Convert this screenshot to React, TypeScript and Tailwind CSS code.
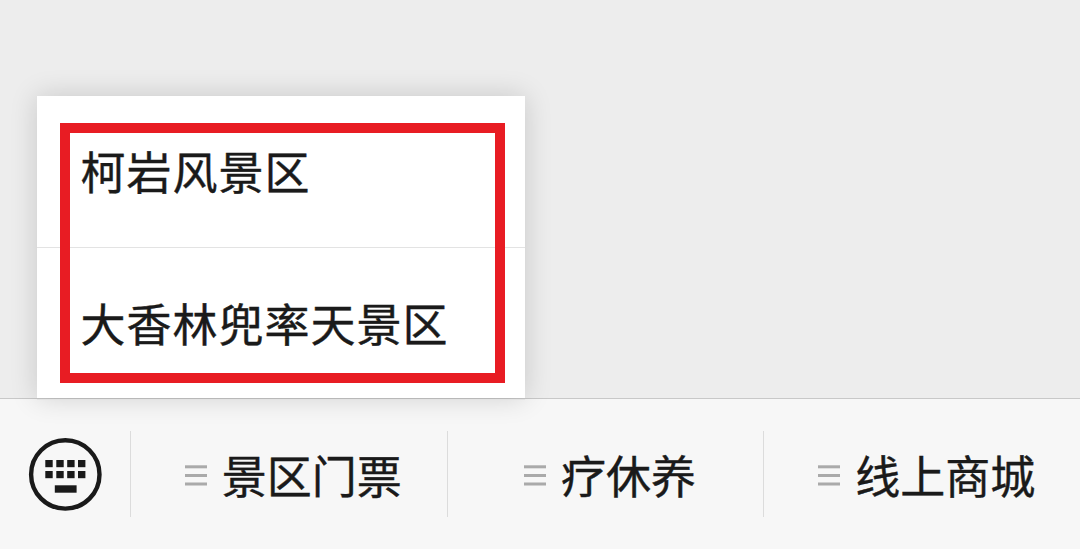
const SUBMENU = ["柯岩风景区", "大香林兜率天景区"];

const TABS = ["景区门票", "疗休养", "线上商城"];

function KeyboardIcon() {
  return (
    <svg width="74" height="74" viewBox="0 0 74 74" fill="none">
      <circle cx="37.3" cy="37.4" r="34.2" stroke="#1a1a1a" strokeWidth="4.4" />
      {[23, 34].map((y) =>
        [17.3, 28.3, 39.2, 50].map((x) => (
          <rect
            key={`${x}-${y}`}
            x={x}
            y={y}
            width="7.4"
            height="7.2"
            fill="#1a1a1a"
          />
        )),
      )}
      <rect x="26.8" y="48.3" width="21.8" height="7.4" fill="#1a1a1a" />
    </svg>
  );
}

function MenuLines() {
  return (
    <svg
      className="mt-1"
      width="22"
      height="22"
      viewBox="0 0 22 22"
      fill="#aaaaaa"
    >
      <rect y="0.3" width="22" height="3" />
      <rect y="9" width="22" height="3" />
      <rect y="17.5" width="22" height="3" />
    </svg>
  );
}

export default function App() {
  return (
    <div
      className="flex h-[549px] w-[1080px] flex-col overflow-hidden bg-[#ededed] text-[#1a1a1a] [-webkit-text-stroke:0.4px_#1a1a1a]"
      style={{ fontFamily: "'Noto Sans CJK SC', sans-serif" }}
    >
      {/* Chat area with the opened submenu */}
      <div className="flex h-[398px] items-end pl-[37px]">
        <div className="relative z-10 h-[302px] w-[487.5px] bg-white shadow-[0_0_26px_rgba(0,0,0,0.16)]">
          {SUBMENU.map((item) => (
            <div
              key={item}
              className="flex h-[152px] items-center border-b border-[#e3e3e3] pl-[43.5px] text-[45px] leading-none tracking-[1px] last:h-[150px] last:border-b-0"
            >
              <span className="pb-0.5">{item}</span>
            </div>
          ))}
          {/* Highlight frame */}
          <div className="absolute top-[27px] left-[23px] h-[260px] w-[445px] border-10 border-[#e81c23]" />
        </div>
      </div>

      {/* Bottom menu bar */}
      <div className="flex h-[151px] items-center border-t border-[#c8c8c8] bg-[#f7f7f7]">
        <div className="flex w-[130px] justify-center">
          <KeyboardIcon />
        </div>
        {TABS.map((tab) => (
          <div
            key={tab}
            className="flex h-[86px] flex-1 items-center justify-center gap-[15px] border-l border-[#dcdcdc] pl-[9px]"
          >
            <MenuLines />
            <span className="text-[45px] leading-none">{tab}</span>
          </div>
        ))}
      </div>
    </div>
  );
}
